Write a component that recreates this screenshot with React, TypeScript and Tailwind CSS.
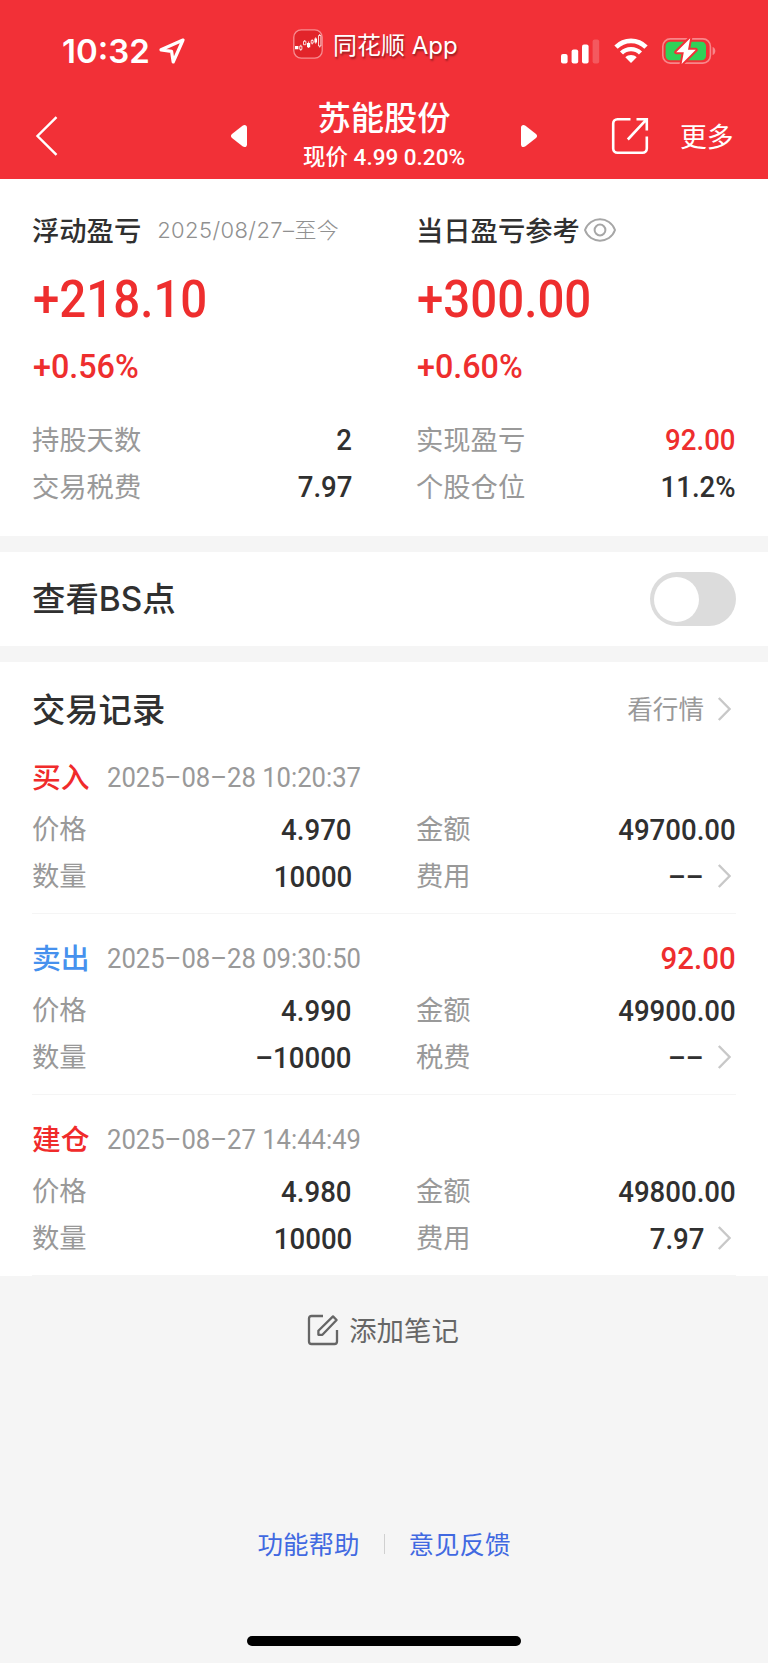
import { useState } from 'react'
import clsx from 'clsx'

/**
 * App.tsx — 个股盈亏详情页
 * 顶部导航 + 盈亏概览 + BS点开关 + 交易记录
 */

const RECORDS = [
  {
    type: '买入',
    color: 'text-[#f02b2b]',
    time: '2025–08–28 10:20:37',
    profit: '',
    price: '4.970',
    count: '10000',
    amount: '49700.00',
    feeLabel: '费用',
    fee: '––',
  },
  {
    type: '卖出',
    color: 'text-[#4691ee]',
    time: '2025–08–28 09:30:50',
    profit: '92.00',
    price: '4.990',
    count: '–10000',
    amount: '49900.00',
    feeLabel: '税费',
    fee: '––',
  },
  {
    type: '建仓',
    color: 'text-[#f02b2b]',
    time: '2025–08–27 14:44:49',
    profit: '',
    price: '4.980',
    count: '10000',
    amount: '49800.00',
    feeLabel: '费用',
    fee: '7.97',
  },
]

function Chevron() {
  return (
    <svg width="14" height="24" viewBox="0 0 14 24" fill="none" className="ml-[13px] mr-[5px] shrink-0">
      <path d="M1.8 1L12.6 12L1.8 23" stroke="#c8c8c8" strokeWidth="2.4" />
    </svg>
  )
}

// 标签 + 数值
function Row({ label, value, red, arrow }: { label: string; value: string; red?: boolean; arrow?: boolean }) {
  return (
    <div className="flex h-[47px] items-center justify-between">
      <span className="pb-[3px] text-[27.3px] text-[#999]">{label}</span>
      <span className="flex items-center">
        <span
          className={clsx(
            'origin-right scale-x-[0.92] font-[Roboto] text-[30px] font-medium',
            red ? 'text-[#ee2e2e]' : 'text-[#303030]'
          )}
        >
          {value}
        </span>
        {arrow && <Chevron />}
      </span>
    </div>
  )
}

// 盈亏金额 + 比例
function Profit({ amount, percent }: { amount: string; percent: string }) {
  return (
    <div className="pl-px font-[Roboto] font-medium text-[#ee2e2e]">
      <p className="h-[90px] origin-left scale-x-[0.93] text-[51px] leading-[94px]">{amount}</p>
      <p className="h-[46px] origin-left scale-x-[0.95] text-[34px] leading-[46px]">{percent}</p>
    </div>
  )
}

function StatusBar() {
  return (
    <div className="flex h-[102px] items-center pl-[62px] pr-[52px]">
      <span className="w-[88px] whitespace-nowrap pt-[2px] font-[Inter] text-[33px] font-semibold">10:32</span>
      <svg width="28" height="28" viewBox="0 0 28 28" fill="none" className="ml-2">
        <path
          d="M25 3L3 12.8L13.6 14.4L15.2 25Z"
          stroke="white"
          strokeWidth="3.2"
          strokeLinejoin="round"
        />
      </svg>

      <div className="mb-[14px] ml-[107px] flex items-center">
        <svg width="30" height="30" viewBox="0 0 30 30" fill="none">
          <rect x="0.8" y="0.8" width="28.4" height="28.4" rx="7.5" fill="#e2242a" stroke="#f78c90" strokeWidth="1.3" />
          <path d="M2 17h3.4v3.2H2zM14 14h3.2v4.2H14zM21.4 9.5h2.6v4h-2.6z" fill="white" />
          <path
            d="M6.7 17.2h2.2v3.2h-2.2zM10.5 12.3h2.4v3.4h-2.4zM18.2 11.5h2v2.6h-2zM25.5 6.5h2.4v10.5h-2.4zM7.8 15.8v1.4M7.8 20.4v1.4M11.7 11v1.3M15.6 12.5v6.5M19.2 10.3v1.2M19.2 14.1v1.3M22.7 8.3v6.4M26.7 5v1.5M26.7 17v1.5"
            stroke="white"
            strokeWidth="0.8"
          />
        </svg>
        <span className="ml-[10px] whitespace-nowrap pt-[3px] font-[Inter,'Noto_Sans_CJK_SC',sans-serif] text-[24px] leading-8 [text-shadow:1px_2px_2px_rgba(0,0,0,0.4)]">
          同花顺 App
        </span>
      </div>

      <div className="ml-auto flex items-center">
        <svg width="39" height="25" viewBox="0 0 39 25" fill="white">
          <rect x="0" y="15" width="6.6" height="9.5" rx="2" />
          <rect x="10.6" y="10.5" width="6.6" height="14" rx="2" />
          <rect x="21" y="5.5" width="6.6" height="19" rx="2" />
          <rect x="31.6" y="0.5" width="6.6" height="24" rx="2" opacity="0.2" />
        </svg>
        <svg width="34" height="26" viewBox="0 0 34 26" fill="none" className="ml-[14px]">
          <path d="M2 9.2C10.2 0.8 23.8 0.8 32 9.2" stroke="white" strokeWidth="4.6" />
          <path d="M7.5 15C12.8 9.8 21.2 9.8 26.5 15" stroke="white" strokeWidth="4.4" />
          <path d="M17 25L11.3 19.3C14.4 16.3 19.6 16.3 22.7 19.3Z" fill="white" />
        </svg>
        <svg width="54" height="28" viewBox="0 0 54 28" fill="none" className="ml-[14px]">
          <rect x="0.8" y="1.9" width="47.6" height="24.2" rx="7.5" stroke="#f8868a" strokeWidth="1.6" />
          <rect x="3.6" y="4.8" width="40.4" height="18.4" rx="4.5" fill="#30d158" />
          <path d="M50.6 10C54.2 11 54.2 17 50.6 18Z" fill="#f8868a" />
          <path
            d="M28.2 1.2L14.2 15.2H21.8L19.6 27L33.8 12.8H26Z"
            fill="white"
            stroke="#f23037"
            strokeWidth="4"
            strokeLinejoin="round"
            paintOrder="stroke"
          />
        </svg>
      </div>
    </div>
  )
}

function NavBar() {
  return (
    <div className="grid h-[68px] grid-cols-[1fr_308px_1fr] grid-rows-[68px]">
      <div className="flex items-center pl-[35px]">
        <svg width="24" height="40" viewBox="0 0 24 40" fill="none">
          <path d="M21.5 1.2L2.5 20L21.5 38.8" stroke="white" strokeWidth="2.4" />
        </svg>
      </div>

      <div className="flex items-center justify-between">
        <svg width="18" height="24" viewBox="0 0 18 24" fill="white">
          <path d="M2 10L12.5 1.7C14.5 0.2 17 1 17 3.5V20.5C17 23 14.5 23.8 12.5 22.3L2 14C0.6 12.8 0.6 11.2 2 10Z" />
        </svg>
        <div className="flex flex-col items-center whitespace-nowrap">
          <h1 className="text-[33.3px] font-medium leading-[40px]">苏能股份</h1>
          <p className="pt-[2px] font-[Roboto,'Noto_Sans_CJK_SC',sans-serif] text-[22.5px] font-medium leading-[39px]">
            现价 4.99 0.20%
          </p>
        </div>
        <svg width="18" height="24" viewBox="0 0 18 24" fill="white">
          <path d="M16 10L5.5 1.7C3.5 0.2 1 1 1 3.5V20.5C1 23 3.5 23.8 5.5 22.3L16 14C17.4 12.8 17.4 11.2 16 10Z" />
        </svg>
      </div>

      <div className="flex items-center pl-[73px]">
        <svg width="38" height="38" viewBox="0 0 38 38" fill="none" stroke="white" strokeWidth="2.6">
          <path d="M19.5 2.2H6.5C4 2.2 2.2 4 2.2 6.5V31.5C2.2 34 4 35.8 6.5 35.8H31.5C34 35.8 35.8 34 35.8 31.5V19.5" />
          <path d="M25.5 2.2H35.8V13.5M35.3 2.7L16.8 22.5" />
        </svg>
        <span className="ml-[31px] whitespace-nowrap text-[26.8px]">更多</span>
      </div>
    </div>
  )
}

export default function App() {
  const [showBs, setShowBs] = useState(false)

  return (
    <div className="flex h-[1663px] w-[768px] flex-col overflow-hidden bg-[#f5f5f5] font-['Noto_Sans_CJK_SC',sans-serif]">
      {/* 顶部导航 */}
      <header className="h-[179px] bg-[#f23037] text-white">
        <StatusBar />
        <NavBar />
      </header>

      {/* 盈亏概览 */}
      <section className="grid h-[357px] grid-cols-2 gap-x-16 bg-white px-8 pt-7">
        <div>
          <div className="flex h-[46px] items-center whitespace-nowrap">
            <h2 className="pb-[2px] text-[27.3px] font-medium text-[#303030]">浮动盈亏</h2>
            <span className="ml-4 font-[Inter,'Noto_Sans_CJK_SC',sans-serif] text-[22px] font-light tracking-[0.4px] text-[#909090]">
              2025/08/27–至今
            </span>
          </div>
          <Profit amount="+218.10" percent="+0.56%" />
          <div className="mt-[27px]">
            <Row label="持股天数" value="2" />
            <Row label="交易税费" value="7.97" />
          </div>
        </div>
        <div>
          <div className="flex h-[46px] items-center whitespace-nowrap">
            <h2 className="pb-[2px] text-[27.3px] font-medium text-[#303030]">当日盈亏参考</h2>
            <svg width="32" height="24" viewBox="0 0 32 24" fill="none" stroke="#a6a6a6" strokeWidth="2" className="ml-1">
              <path d="M1 12C6 -2.2 26 -2.2 31 12C26 26.2 6 26.2 1 12Z" />
              <circle cx="16" cy="12" r="5.4" />
            </svg>
          </div>
          <Profit amount="+300.00" percent="+0.60%" />
          <div className="mt-[27px]">
            <Row label="实现盈亏" value="92.00" red />
            <Row label="个股仓位" value="11.2%" />
          </div>
        </div>
      </section>

      {/* BS点开关 */}
      <section className="mt-4 flex h-[94px] items-center justify-between bg-white px-8">
        <h2 className="pb-[2px] text-[33.4px] font-medium text-[#303030]">
          查看<span className="font-[Inter]">BS</span>点
        </h2>
        <button
          onClick={() => setShowBs(!showBs)}
          className={clsx(
            'flex h-[54px] w-[86px] items-center rounded-full px-1',
            showBs ? 'justify-end bg-[#f23037]' : 'bg-[#dcdcdc]'
          )}
        >
          <span className="size-[45px] rounded-full bg-white" />
        </button>
      </section>

      {/* 交易记录 */}
      <section className="mt-4 bg-white px-8">
        <div className="flex h-[94px] items-center justify-between">
          <h2 className="pb-[2px] text-[33.3px] font-medium text-[#303030]">交易记录</h2>
          <span className="flex items-center text-[25.6px] text-[#999]">
            <span className="pb-px">看行情</span>
            <Chevron />
          </span>
        </div>

        {RECORDS.map((r) => (
          <div key={r.time} className="mb-[23.5px] border-b border-[#f5f5f5] pb-[13px] last:mb-0">
            <div className="mb-[7.5px] flex h-[42px] items-center">
              <span className={clsx('shrink-0 pb-[2px] text-[28.8px] font-medium', r.color)}>{r.type}</span>
              <span className="ml-[17px] origin-left scale-x-[0.915] whitespace-nowrap pt-px font-[Roboto] text-[28px] text-[#999]">
                {r.time}
              </span>
              {r.profit && (
                <span className="ml-auto origin-right scale-x-[0.92] font-[Roboto] text-[32px] font-medium text-[#ee2e2e]">
                  {r.profit}
                </span>
              )}
            </div>
            <div className="grid grid-cols-2 gap-x-16">
              <Row label="价格" value={r.price} />
              <Row label="金额" value={r.amount} />
              <Row label="数量" value={r.count} />
              <Row label={r.feeLabel} value={r.fee} arrow />
            </div>
          </div>
        ))}
      </section>

      {/* 添加笔记 */}
      <div className="mt-[29px] flex h-[50px] items-center justify-center pr-[2px] text-[#666]">
        <svg width="32" height="32" viewBox="0 0 32 32" fill="none" stroke="#666" strokeWidth="2.3">
          <path d="M16 2H4.5C3 2 2 3 2 4.5V27.5C2 29 3 30 4.5 30H27.5C29 30 30 29 30 27.5V16" />
          <path d="M11.4 20.8V16.8L26 2.4L29.6 6L15.4 20.8Z" strokeLinejoin="round" />
        </svg>
        <span className="ml-[10px] text-[27.4px]">添加笔记</span>
      </div>

      {/* 底部链接 */}
      <div className="mt-[164px] flex h-[50px] items-center justify-center text-[25.5px] text-[#4169e1]">
        <span>功能帮助</span>
        <span className="mx-6 h-5 w-px bg-[#d0d0d0]" />
        <span>意见反馈</span>
      </div>

      <div className="mx-auto mb-[17px] mt-auto h-[10px] w-[274px] rounded-full bg-black" />
    </div>
  )
}
